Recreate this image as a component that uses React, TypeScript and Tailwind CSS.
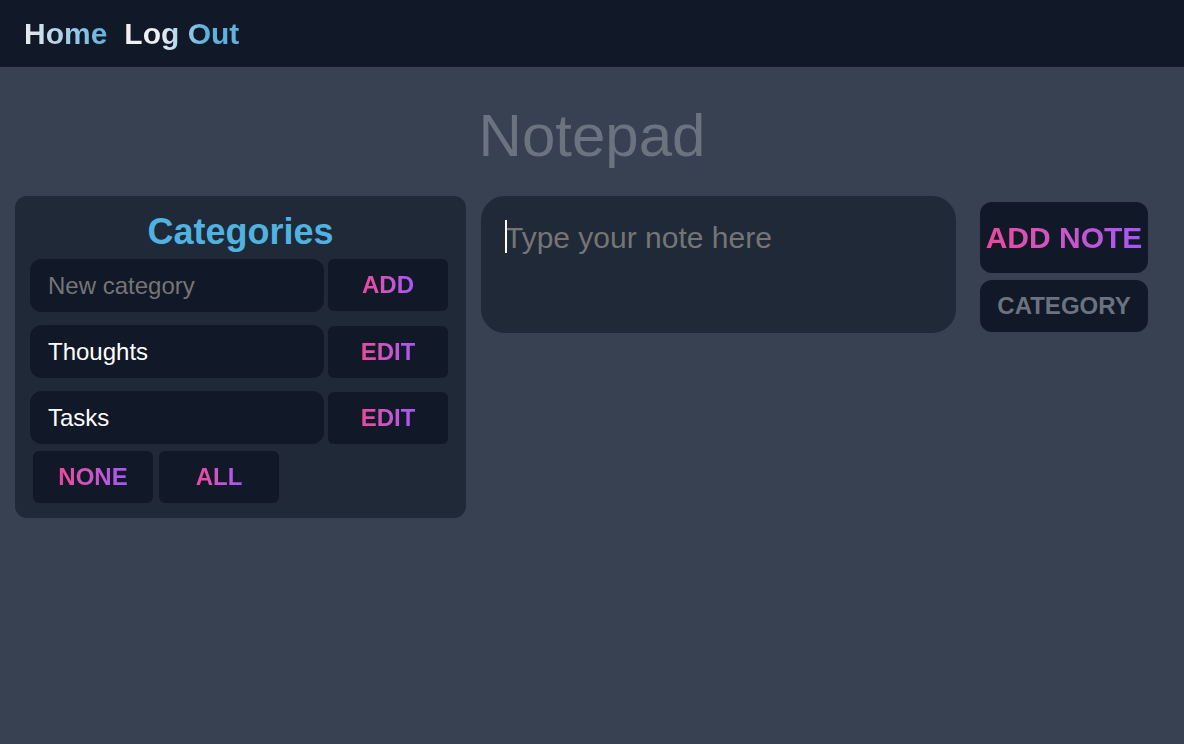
import React from "react";

const grad = "bg-linear-to-r from-[#ec4899] to-[#a855f7] bg-clip-text text-transparent";

function SmallBtn({ label }: { label: string }) {
  return (
    <button className="w-[120px] h-[52px] rounded-md bg-[#111827] flex items-center justify-center">
      <span className={`text-2xl font-bold leading-none ${grad}`}>{label}</span>
    </button>
  );
}

export default function App() {
  return (
    <div
      className="min-h-screen bg-[#374151]"
      style={{ fontFamily: '"Liberation Sans", Arial, sans-serif' }}
    >
      <nav className="h-[67px] bg-[#111827] flex items-center px-6">
        <a className="text-3xl font-bold bg-linear-to-r from-[#e8ebee] to-[#5fb2dd] bg-clip-text text-transparent">
          Home
        </a>
        <a className="ml-[17px] text-3xl font-bold bg-linear-to-r from-[#eef0f2] from-30% to-[#5fb2dd] to-70% bg-clip-text text-transparent">
          Log Out
        </a>
      </nav>

      <h1 className="mt-[39px] text-6xl leading-none text-center text-[#6b7280]">Notepad</h1>

      <div className="mt-[30px] flex items-start px-[15px]">
        <div className="w-[451px] rounded-xl bg-[#1f2937] pt-[16px] pb-[15px] pl-[15px]">
          <h2 className="text-4xl leading-10 font-bold text-center text-[#50b2e0] pr-[15px]">Categories</h2>
          <div className="mt-[7px] flex gap-1">
            <input
              className="w-[294px] h-[53px] rounded-xl bg-[#111827] pl-[18px] text-2xl text-white placeholder-[#757575] outline-none"
              placeholder="New category"
            />
            <SmallBtn label="ADD" />
          </div>
          <div className="mt-[13px] flex gap-1 items-center">
            <input
              className="w-[294px] h-[53px] rounded-xl bg-[#111827] pl-[18px] text-2xl text-white outline-none"
              defaultValue="Thoughts"
            />
            <SmallBtn label="EDIT" />
          </div>
          <div className="mt-[13px] flex gap-1 items-center">
            <input
              className="w-[294px] h-[53px] rounded-xl bg-[#111827] pl-[18px] text-2xl text-white outline-none"
              defaultValue="Tasks"
            />
            <SmallBtn label="EDIT" />
          </div>
          <div className="mt-[7px] ml-[3px] flex gap-[6px]">
            <SmallBtn label="NONE" />
            <SmallBtn label="ALL" />
          </div>
        </div>

        <div className="relative ml-[15px]">
          <textarea
            autoFocus
            className="block w-[475px] h-[137px] resize-none rounded-3xl bg-[#1f2937] p-6 pt-[24px] text-3xl text-white placeholder-[#757575] caret-white outline-none"
            placeholder="Type your note here"
          />
          <span className="pointer-events-none absolute left-[24px] top-[24px] w-[2px] h-[33px] bg-white" />
        </div>

        <div className="ml-6 mt-[6px] flex flex-col gap-[7px] w-[168px]">
          <button className="h-[71px] rounded-xl bg-[#111827] flex items-center justify-center">
            <span className={`text-3xl font-bold whitespace-nowrap leading-none ${grad}`}>ADD NOTE</span>
          </button>
          <button className="h-[52px] rounded-xl bg-[#111827] flex items-center justify-center">
            <span className="text-2xl font-bold leading-none text-[#6b7280]">CATEGORY</span>
          </button>
        </div>
      </div>
    </div>
  );
}
